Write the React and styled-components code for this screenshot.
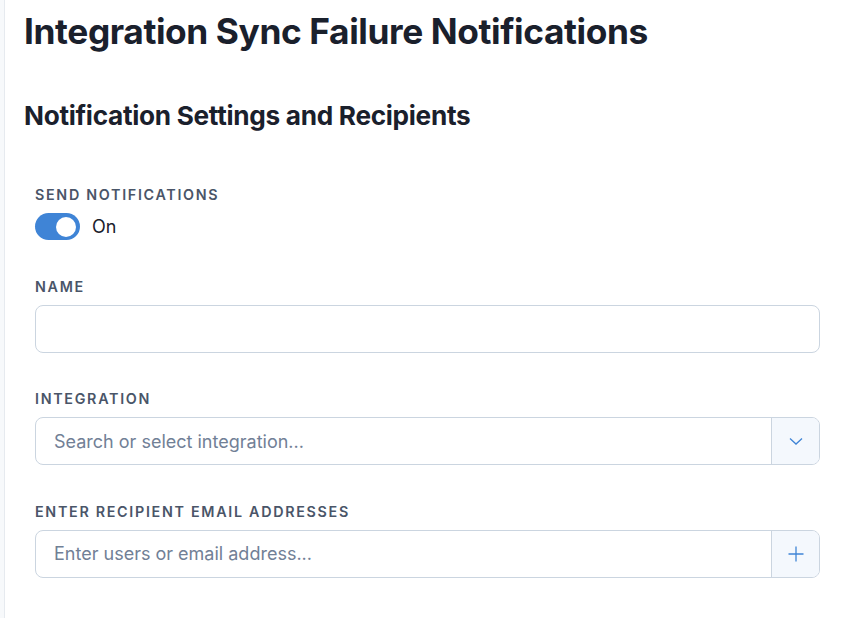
import styled, { createGlobalStyle } from "styled-components";
import { useState } from "react";

const GlobalStyle = createGlobalStyle`
  html, body {
    margin: 0;
    padding: 0;
    background: #ffffff;
    font-family: Inter, "Noto Sans", sans-serif;
    color: #1a202c;
  }
  * { box-sizing: border-box; }
`;

const Shell = styled.div`
  display: flex;
  min-height: 618px;
`;

const SideStrip = styled.div`
  width: 5px;
  flex-shrink: 0;
  background: #f7f9fb;
  border-right: 1px solid #e6eaef;
`;

const Main = styled.main`
  flex: 1;
  padding: 10px 46px 0 19px;
`;

const Title = styled.h1`
  margin: 0;
  font-size: 35.3px;
  font-weight: 700;
  line-height: 44px;
  letter-spacing: -0.4px;
  color: #1a202c;
`;

const SubTitle = styled.h2`
  margin: 46px 0 0;
  font-size: 26.2px;
  font-weight: 700;
  line-height: 32px;
  letter-spacing: -0.3px;
  color: #1a202c;
`;

const Form = styled.div`
  display: flex;
  flex-direction: column;
  gap: 38.5px;
  padding: 55px 0 0 11px;
`;

const Field = styled.div`
  display: flex;
  flex-direction: column;
  gap: ${(p) => p.$gap || 10}px;
`;

const Label = styled.label`
  font-size: 14.3px;
  font-weight: 600;
  line-height: 16px;
  letter-spacing: 1.7px;
  text-transform: uppercase;
  color: #4a5568;
`;

const ToggleRow = styled.div`
  display: flex;
  align-items: center;
  gap: 12px;
  font-size: 18px;
  color: #1a202c;
`;

const Switch = styled.button`
  position: relative;
  width: 45px;
  height: 27px;
  padding: 0;
  border: none;
  border-radius: 14px;
  background: ${(p) => (p.$on ? "#3f84d6" : "#cbd5e0")};
  cursor: pointer;

  &::after {
    content: "";
    position: absolute;
    top: 3.5px;
    left: ${(p) => (p.$on ? "21px" : "4px")};
    width: 20px;
    height: 20px;
    border-radius: 50%;
    background: #ffffff;
  }
`;

const InputGroup = styled.div`
  display: flex;
  height: 48px;
  border: 1px solid #cbd5e0;
  border-radius: 8px;
  overflow: hidden;
  background: #ffffff;
`;

const TextInput = styled.input`
  flex: 1;
  min-width: 0;
  border: none;
  outline: none;
  padding: 0 18px;
  font-family: inherit;
  font-size: 18px;
  color: #1a202c;
  background: transparent;

  &::placeholder {
    color: #718096;
  }
`;

const AddonButton = styled.button`
  width: 48px;
  flex-shrink: 0;
  display: flex;
  align-items: center;
  justify-content: center;
  border: none;
  border-left: 1px solid #cbd5e0;
  background: #f4f8fd;
  color: #3f84d6;
  padding: 0;
  cursor: pointer;
`;

const ChevronIcon = () => (
  <svg width="16" height="16" viewBox="0 0 16 16" fill="none">
    <path d="M2 5.5l6 5.5 6-5.5" stroke="currentColor" strokeWidth="1.3" />
  </svg>
);

const PlusIcon = () => (
  <svg width="18" height="18" viewBox="0 0 18 18" fill="none">
    <path d="M9 1.5v15M1.5 9h15" stroke="currentColor" strokeWidth="1.3" />
  </svg>
);

const App = () => {
  const [enabled, setEnabled] = useState(true);

  return (
    <>
      <GlobalStyle />
      <Shell>
        <SideStrip />
        <Main>
          <Title>Integration Sync Failure Notifications</Title>
          <SubTitle>Notification Settings and Recipients</SubTitle>
          <Form>
            <Field $gap={10}>
              <Label>Send Notifications</Label>
              <ToggleRow>
                <Switch $on={enabled} onClick={() => setEnabled(!enabled)} />
                {enabled ? "On" : "Off"}
              </ToggleRow>
            </Field>
            <Field>
              <Label>Name</Label>
              <InputGroup>
                <TextInput />
              </InputGroup>
            </Field>
            <Field>
              <Label>Integration</Label>
              <InputGroup>
                <TextInput placeholder="Search or select integration..." />
                <AddonButton>
                  <ChevronIcon />
                </AddonButton>
              </InputGroup>
            </Field>
            <Field>
              <Label>Enter recipient email addresses</Label>
              <InputGroup>
                <TextInput placeholder="Enter users or email address..." />
                <AddonButton>
                  <PlusIcon />
                </AddonButton>
              </InputGroup>
            </Field>
          </Form>
        </Main>
      </Shell>
    </>
  );
};

export default App;
